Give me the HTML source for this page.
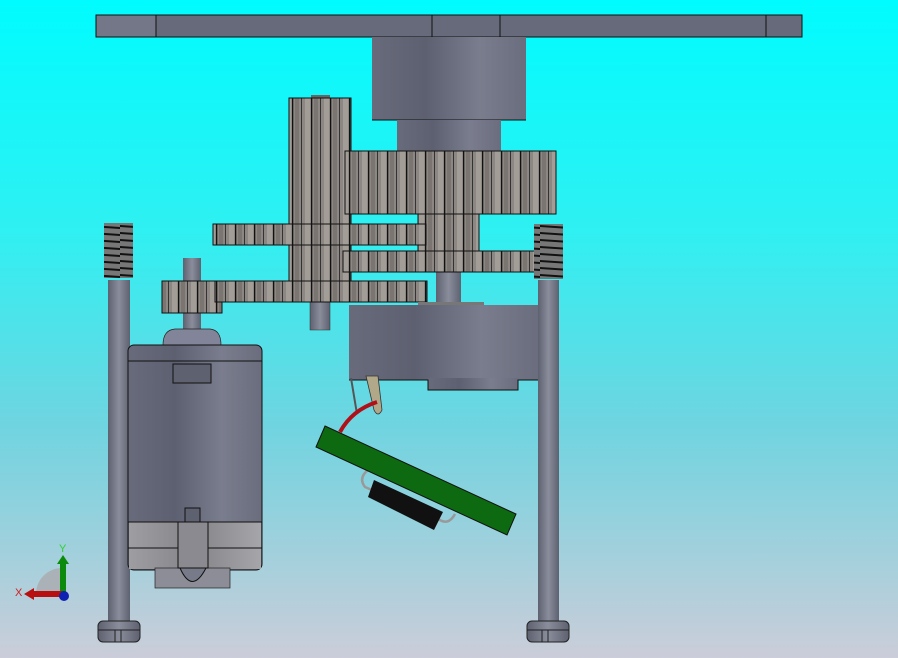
<!DOCTYPE html>
<html><head><meta charset="utf-8"><style>
html,body{margin:0;padding:0;width:898px;height:658px;overflow:hidden;}
svg{display:block;}
</style></head><body>
<svg width="898" height="658" viewBox="0 0 898 658" xmlns="http://www.w3.org/2000/svg">
<defs>
<linearGradient id="bg" x1="0" y1="0" x2="0" y2="1">
<stop offset="0" stop-color="#00fcff"/><stop offset="0.35" stop-color="#2ff0f2"/><stop offset="0.65" stop-color="#70d4e0"/><stop offset="1" stop-color="#cbcdd9"/>
</linearGradient>
<linearGradient id="cyl" x1="0" y1="0" x2="1" y2="0">
<stop offset="0" stop-color="#686b7b"/><stop offset="0.35" stop-color="#5d6070"/><stop offset="0.7" stop-color="#7a7d8d"/><stop offset="1" stop-color="#6a6d7d"/>
</linearGradient>
<linearGradient id="post" x1="0" y1="0" x2="1" y2="0">
<stop offset="0" stop-color="#5e6170"/><stop offset="0.5" stop-color="#8a8d9b"/><stop offset="1" stop-color="#5e6170"/>
</linearGradient>
<linearGradient id="band" x1="0" y1="0" x2="1" y2="0">
<stop offset="0" stop-color="#9e9ea2"/><stop offset="0.5" stop-color="#858589"/><stop offset="1" stop-color="#a6a6aa"/>
</linearGradient>
<pattern id="teeth" width="19" height="10" patternUnits="userSpaceOnUse">
<rect width="19" height="10" fill="#8c8782"/>
<rect x="1" width="5" height="10" fill="#a39d97"/>
<rect x="10" width="4" height="10" fill="#7a7571"/>
<rect x="7" width="1.3" height="10" fill="#111"/>
<rect x="16" width="1" height="10" fill="#333"/>
</pattern>
<pattern id="spring" width="30" height="7" patternUnits="userSpaceOnUse">
<rect width="30" height="7" fill="#777"/>
<path d="M0 1 L30 3 L30 5 L0 3Z" fill="#111"/>
</pattern>
</defs>
<rect width="898" height="658" fill="url(#bg)"/>

<rect x="96" y="15" width="706" height="22" fill="#676a7a"/>
<rect x="96" y="15" width="60" height="22" fill="#747787"/>
<g stroke="#111"><line x1="156" y1="15" x2="156" y2="37"/><line x1="432" y1="15" x2="432" y2="37"/><line x1="500" y1="15" x2="500" y2="37"/><line x1="766" y1="15" x2="766" y2="37"/></g>
<rect x="96" y="15" width="706" height="22" fill="none" stroke="#111"/>

<rect x="372" y="37" width="154" height="83" fill="url(#cyl)"/>
<line x1="372" y1="120" x2="526" y2="120" stroke="#111"/>
<rect x="397" y="120" width="104" height="32" fill="url(#cyl)"/>

<rect x="311" y="95" width="19" height="4" fill="#666"/>
<rect x="289" y="98" width="62" height="183" fill="url(#teeth)" stroke="#111"/>
<rect x="345" y="151" width="211" height="63" fill="url(#teeth)" stroke="#111"/>
<rect x="418" y="214" width="61" height="37" fill="url(#teeth)" stroke="#111"/>
<rect x="213" y="224" width="213" height="21" fill="url(#teeth)" stroke="#111"/>
<rect x="436" y="272" width="25" height="33" fill="url(#post)"/>
<rect x="343" y="251" width="193" height="21" fill="url(#teeth)" stroke="#111"/>
<rect x="310" y="300" width="20" height="30" fill="url(#post)" stroke="#333" stroke-width="0.5"/>
<rect x="183" y="258" width="18" height="74" fill="url(#post)"/>
<rect x="162" y="281" width="60" height="32" fill="url(#teeth)" stroke="#111"/>
<rect x="215" y="281" width="212" height="21" fill="url(#teeth)" stroke="#111"/>

<rect x="349" y="305" width="189" height="75" fill="url(#cyl)"/>
<rect x="428" y="378" width="90" height="12" fill="url(#cyl)"/>
<path d="M349 380 H428 V390 H518 V380 H538" fill="none" stroke="#111"/>
<rect x="418" y="302" width="66" height="3" fill="#777"/>

<rect x="108" y="280" width="22" height="345" fill="url(#post)"/>
<rect x="538" y="280" width="21" height="345" fill="url(#post)"/>
<rect x="104" y="223" width="29" height="55" fill="url(#spring)"/>
<rect x="534" y="224" width="29" height="55" fill="url(#spring)"/>
<rect x="98" y="621" width="42" height="21" rx="5" fill="url(#post)" stroke="#222"/>
<line x1="98" y1="630" x2="140" y2="630" stroke="#222"/>
<rect x="115" y="630" width="6" height="12" fill="none" stroke="#222"/>
<rect x="527" y="621" width="42" height="21" rx="5" fill="url(#post)" stroke="#222"/>
<line x1="527" y1="630" x2="569" y2="630" stroke="#222"/>
<rect x="542" y="630" width="6" height="12" fill="none" stroke="#222"/>

<path d="M163 345 Q163 330 175 329 H210 Q221 330 221 345Z" fill="#82859a" stroke="#222" stroke-width="0.7"/>
<rect x="128" y="345" width="134" height="225" rx="6" fill="url(#cyl)" stroke="#111"/>
<line x1="128" y1="361" x2="262" y2="361" stroke="#111"/>
<rect x="173" y="364" width="38" height="19" fill="#5e6170" stroke="#111"/>
<rect x="129" y="522" width="132" height="47" fill="url(#band)"/>
<line x1="128" y1="522" x2="262" y2="522" stroke="#111"/>
<line x1="128" y1="548" x2="262" y2="548" stroke="#111"/>
<rect x="155" y="568" width="75" height="20" fill="#8c8d96" stroke="#222" stroke-width="0.7"/>
<rect x="178" y="522" width="30" height="46" fill="#8a8a90" stroke="#111"/>
<path d="M180 568 Q192 595 206 568Z" fill="#777a88" stroke="#111"/>
<rect x="185" y="508" width="15" height="14" fill="#5e6170" stroke="#111"/>

<path d="M351 378 L357 414" stroke="#555" stroke-width="2" fill="none"/>
<path d="M366 376 H378 L382 410 Q378 418 374 410Z" fill="#b0a888" stroke="#333" stroke-width="0.8"/>
<path d="M340 432 Q352 410 377 402" stroke="#b0101a" stroke-width="4" fill="none"/>
<path d="M368 470 Q358 478 365 487 L372 490" stroke="#999" stroke-width="2.5" fill="none"/>
<path d="M437 518 Q448 527 455 514" stroke="#999" stroke-width="2.5" fill="none"/>
<polygon points="325,426 516,514 507,535 316,447" fill="#0d6a10" stroke="#111"/>
<polygon points="374,480 443,512 434,530 368,497" fill="#111"/>

<path d="M62 568 A26 26 0 0 0 36 594 H62Z" fill="#aab2b8"/>
<rect x="60" y="562" width="6" height="32" fill="#0b8a0b"/>
<polygon points="57,564 63,555 69,564" fill="#0b8a0b"/>
<rect x="32" y="591" width="32" height="6" fill="#b81010"/>
<polygon points="34,588 24,594 34,600" fill="#b81010"/>
<circle cx="64" cy="596" r="5" fill="#1020b0"/>
<text x="59" y="552" font-family="Liberation Sans, sans-serif" font-size="11" fill="#2fd02f">Y</text>
<text x="15" y="596" font-family="Liberation Sans, sans-serif" font-size="11" fill="#d02020">X</text>
</svg>
</body></html>
